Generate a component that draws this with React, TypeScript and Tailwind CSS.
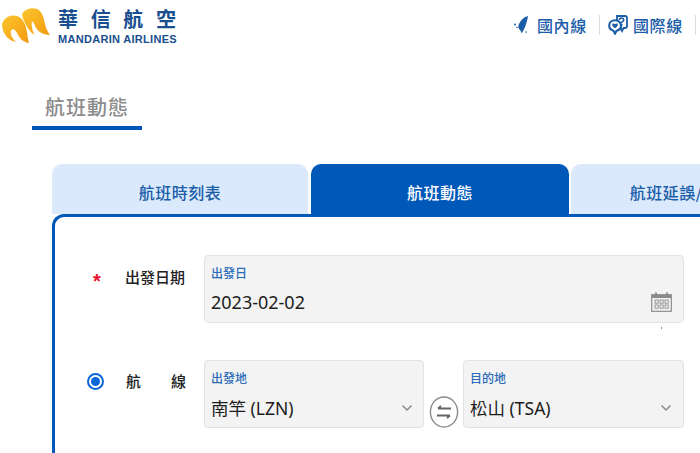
import React from "react";

const cjk = "font-['Noto_Sans_CJK_TC','Noto_Sans','Liberation_Sans',sans-serif]";
const ui = "font-['Noto_Sans','Noto_Sans_CJK_TC',sans-serif]";

function Logo() {
  return (
    <svg width="50" height="36" viewBox="0 8 50 36" className="shrink-0">
      <defs>
        <linearGradient id="lg" x1="0" y1="0" x2="1" y2="1">
          <stop offset="0" stopColor="#fcc62c" />
          <stop offset="1" stopColor="#f39a12" />
        </linearGradient>
      </defs>
      <path d="M1 24C3 17 10 14 16 16C22 18 25 25 26 32C26.5 36 27 40 28 43C21 42 18 37 16 33C14 29 11 28 10 31C9 34 11 38 15 42C8 41 1 34 1 24Z" fill="url(#lg)" />
      <path d="M21 14C24 9 31 7 36 9C41 11 43 18 44 24C45 29 47 32 49 35C42 35 36 31 34 26C33 23 32 21 31 22C30 24 31 28 33 35C27 30 22 21 21 14Z" fill="url(#lg)" />
    </svg>
  );
}

function TaiwanIcon() {
  return (
    <svg width="15" height="18" viewBox="0 0 15 18" className="shrink-0">
      <path d="M14 0C10 1 7 4 5.5 7C4 9.5 4 11 5 13C6.5 14 7 15.5 7.5 17.5C10 14 12.5 9 14 0Z" fill="#1a5da8" />
      <circle cx="1" cy="8.5" r="1" fill="#1a5da8" />
      <circle cx="3" cy="11.5" r="0.8" fill="#1a5da8" />
      <circle cx="12" cy="16" r="0.8" fill="#1a5da8" />
    </svg>
  );
}

function GlobeChat() {
  return (
    <svg width="20" height="20" viewBox="0 0 20 20" className="shrink-0">
      <path d="M9 1H17C18.2 1 19 1.8 19 3V11C19 12.2 18.2 13 17 13H15.5L14 16L12.5 13H9Z" fill="#fff" stroke="#1a5da8" strokeWidth="1.8" />
      <path d="M11.4 5C11.4 3.6 12.4 3 13.5 3C14.7 3 15.7 3.7 15.7 4.9C15.7 6.4 13.7 6.4 13.7 8" fill="none" stroke="#1a5da8" strokeWidth="1.6" />
      <circle cx="13.7" cy="10" r="1" fill="#1a5da8" />
      <path d="M7 5.2C3.6 5.2 1.2 7.6 1.2 10.6C1.2 13.2 3 15.2 5.5 15.8L7 18.6L8.6 15.8C11.2 15.2 13 13.2 13 10.6C13 7.6 10.4 5.2 7 5.2Z" fill="#fff" stroke="#1a5da8" strokeWidth="2.1" />
      <path d="M7 13.2C5.4 12 4.2 11 4.2 9.7C4.2 8.3 6.2 8 7 9.3C7.8 8 9.8 8.3 9.8 9.7C9.8 11 8.6 12 7 13.2Z" fill="#1a5da8" />
    </svg>
  );
}

function CalendarIcon() {
  return (
    <svg width="21" height="20" viewBox="0 0 21 20" className="shrink-0">
      <rect x="0.7" y="2.7" width="19.6" height="16.6" fill="#f2f2f2" stroke="#8c8c8c" strokeWidth="1.2" />
      <rect x="1" y="3" width="19" height="3" fill="#8c8c8c" />
      <rect x="4" y="0.5" width="2" height="4" fill="#8c8c8c" />
      <rect x="15" y="0.5" width="2" height="4" fill="#8c8c8c" />
      {[4, 9, 14].map((x) =>
        [8, 13].map((y) => <rect key={`${x}-${y}`} x={x} y={y} width="3.2" height="3.2" fill="none" stroke="#8c8c8c" strokeWidth="0.9" />)
      )}
    </svg>
  );
}

function Chevron() {
  return (
    <svg width="12" height="8" viewBox="0 0 12 8" className="shrink-0">
      <path d="M1.5 1.5L6 6L10.5 1.5" fill="none" stroke="#8a8a8a" strokeWidth="1.5" />
    </svg>
  );
}

function SwapIcon() {
  return (
    <svg width="30" height="32" viewBox="0 0 30 32" className="shrink-0">
      <ellipse cx="15" cy="16" rx="13.6" ry="15" fill="#fff" stroke="#8a8a8a" strokeWidth="1.4" />
      <path d="M22 12.5H9M9 12.5L12 10" fill="none" stroke="#666" strokeWidth="1.8" />
      <path d="M8 19.5H21M21 19.5L18 22" fill="none" stroke="#666" strokeWidth="1.8" />
    </svg>
  );
}

function Field({ label, value, width, size, top, icon }: { label: string; value: string; width: string; size: string; top: string; icon: React.ReactNode }) {
  return (
    <div className={`${width} h-[68px] shrink-0 rounded-[4px] border border-[#e3e3e3] bg-[#f3f3f3] pl-[6px] pr-[11px] pt-[9px]`}>
      <div className={`${ui} text-[12px] font-medium leading-[18px] text-[#2a6cb8]`}>{label}</div>
      <div className={`${top} flex items-center justify-between`}>
        <span className={`${ui} ${size} leading-[26px] text-[#1c1c1c]`}>{value}</span>
        {icon}
      </div>
    </div>
  );
}

export default function App() {
  return (
    <div className={`${cjk} h-[453px] w-[700px] overflow-hidden bg-white`}>
      <header className="flex h-[50px] items-start justify-between">
        <div className="flex items-start pl-px pt-[8px]">
          <Logo />
          <div className="ml-[7px] -mt-[1px] flex flex-col">
            <div className="flex h-[24px] w-[118px] justify-between text-[20px] font-bold leading-[24px] text-[#1a4f8f]">
              <span>華</span><span>信</span><span>航</span><span>空</span>
            </div>
            <div className="mt-[2px] whitespace-nowrap font-['Liberation_Sans',sans-serif] text-[11px] font-bold leading-[12px] tracking-[0.3px] text-[#1a4f8f]">
              MANDARIN AIRLINES
            </div>
          </div>
        </div>
        <nav className="flex items-center pt-[15px] text-[#1a5da8]">
          <TaiwanIcon />
          <span className="ml-[8px] w-[50px] whitespace-nowrap text-[16px] font-medium leading-[20px] tracking-[0.6px]">國內線</span>
          <span className="ml-[12px] h-[20px] w-px bg-[#dcdcdc]" />
          <span className="ml-[8px]"><GlobeChat /></span>
          <span className="ml-[5px] w-[50px] whitespace-nowrap text-[16px] font-medium leading-[20px] tracking-[0.6px]">國際線</span>
          <span className="ml-[12px] mr-[4px] h-[20px] w-px bg-[#dcdcdc]" />
        </nav>
      </header>

      <div className="mt-[45px] ml-[32px] w-[110px] border-b-4 border-[#0059b8] pb-[8px] pl-[13px]">
        <h1 className="whitespace-nowrap text-[20px] font-medium leading-[23px] tracking-[1px] text-[#8c8c8c]">航班動態</h1>
      </div>

      <div className="ml-[52px] mt-[34px] w-[800px]">
        <div className="flex h-[50px] text-[16px] font-medium tracking-[0.5px]">
          <div className="flex w-[256px] shrink-0 items-center justify-center rounded-t-[10px] bg-[#dbe9fc] pt-[5px] text-[#1a5da8]">航班時刻表</div>
          <div className="ml-[3px] flex w-[258px] shrink-0 items-center justify-center rounded-t-[10px] bg-[#0059b8] pt-[5px] text-white">航班動態</div>
          <div className="ml-[2px] flex w-[223px] shrink-0 items-center justify-center whitespace-nowrap rounded-t-[10px] bg-[#dbe9fc] pt-[5px] text-[#1a5da8]">航班延誤/取消</div>
        </div>
        <div className="h-[300px] rounded-tl-[12px] border-l-[3px] border-t-[3px] border-[#0059b8] bg-white pt-[38px]">
          <div className="relative flex items-start">
            <div className="flex h-[44px] w-[149px] shrink-0 items-center pl-[38px] text-[15px] font-medium text-[#222]">
              <span className="w-[32px] translate-y-[4px] font-['Liberation_Sans',sans-serif] text-[20px] font-bold leading-none text-[#e8112d]">*</span>
              <span className="whitespace-nowrap">出發日期</span>
            </div>
            <Field label="出發日" value="2023-02-02" width="w-[480px]" size="text-[18px]" top="mt-[6px]" icon={<CalendarIcon />} />
            <span className="absolute left-[606px] top-[72px] h-[2px] w-px bg-[#8a8ac0]" />
          </div>
          <div className="mt-[37px] flex items-start">
            <div className="flex h-[42px] w-[149px] shrink-0 items-center pl-[32px] text-[15px] font-medium text-[#222]">
              <span className="flex h-[17px] w-[17px] shrink-0 items-center justify-center rounded-full border-2 border-[#0b66d8]">
                <span className="h-[9px] w-[9px] rounded-full bg-[#0b66d8]" />
              </span>
              <span className="ml-[22px] flex w-[60px] shrink-0 justify-between"><span>航</span><span>線</span></span>
            </div>
            <Field label="出發地" value="南竿 (LZN)" width="w-[220px]" size="text-[17.5px]" top="mt-[7px]" icon={<span className="-mr-px"><Chevron /></span>} />
            <div className="ml-[5px] mr-[4px] mt-[36px]"><SwapIcon /></div>
            <Field label="目的地" value="松山 (TSA)" width="w-[221px]" size="text-[17.5px]" top="mt-[7px]" icon={<Chevron />} />
          </div>
        </div>
      </div>
    </div>
  );
}
